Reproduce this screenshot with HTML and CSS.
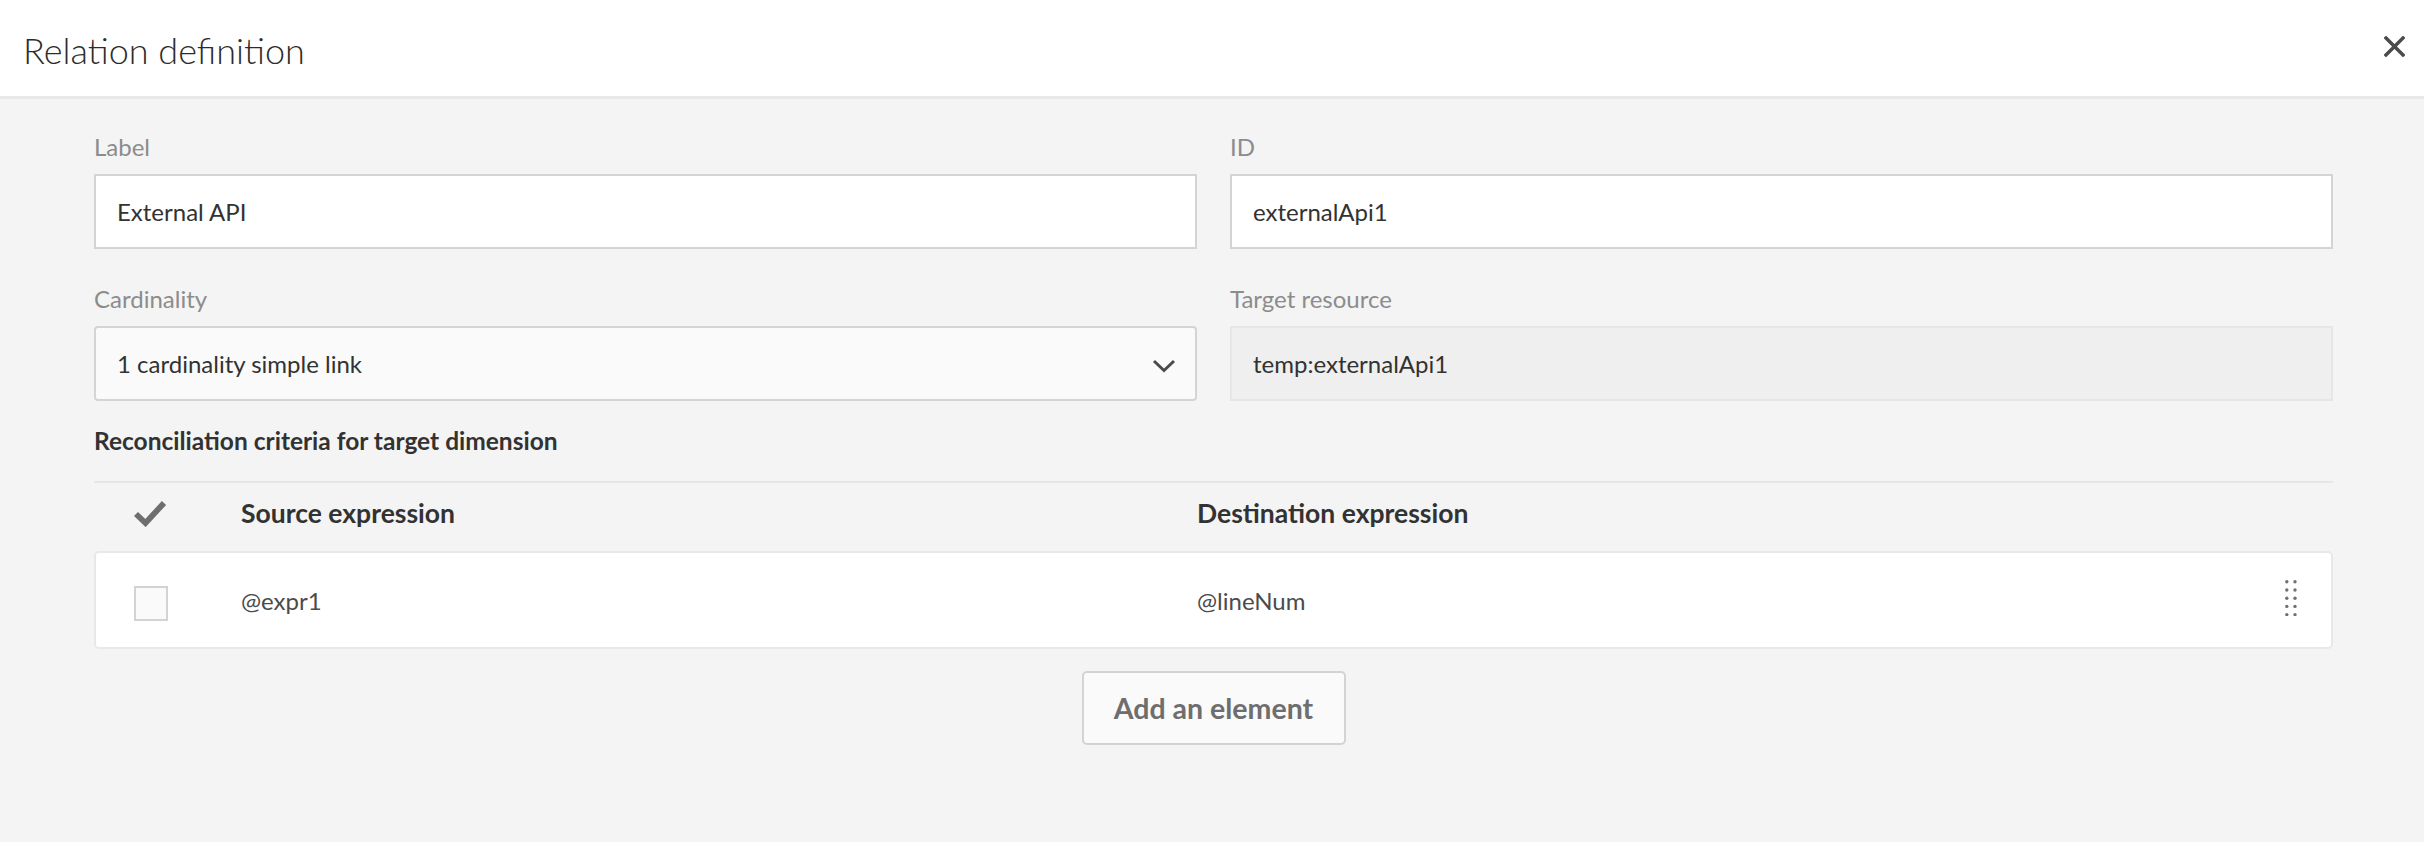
FILE: index.html
```html
<!DOCTYPE html>
<html lang="en">
<head>
<meta charset="utf-8">
<title>Relation definition</title>
<link rel="stylesheet" href="styles.css">
</head>
<body>
<div class="dialog">
  <header class="dlg-header">
    <h1 class="dlg-title">Relation definition</h1>
    <button class="close-btn" aria-label="Close">
      <svg width="21" height="21" viewBox="0 0 21 21"><path d="M2 2 L19 19 M19 2 L2 19" stroke="#4b4b4b" stroke-width="3.4" stroke-linecap="square" fill="none"/></svg>
    </button>
  </header>
  <main class="dlg-body">
    <div class="form-grid">
      <div class="field">
        <label class="field-label">Label</label>
        <div class="text-input">External API</div>
      </div>
      <div class="field">
        <label class="field-label">ID</label>
        <div class="text-input">externalApi1</div>
      </div>
      <div class="field">
        <label class="field-label">Cardinality</label>
        <div class="select-input">
          <span>1 cardinality simple link</span>
          <svg class="chevron" width="24" height="14" viewBox="0 0 24 14"><path d="M2 2 L12 11.5 L22 2" stroke="#4b4b4b" stroke-width="3" fill="none"/></svg>
        </div>
      </div>
      <div class="field">
        <label class="field-label">Target resource</label>
        <div class="text-input readonly">temp:externalApi1</div>
      </div>
    </div>

    <h2 class="section-title">Reconciliation criteria for target dimension</h2>

    <div class="criteria">
      <div class="criteria-head">
        <div class="cell-check">
          <svg width="34" height="27" viewBox="0 0 34 27"><path d="M3 14 L12.5 23 L31 3" stroke="#6e6e6e" stroke-width="5.8" fill="none"/></svg>
        </div>
        <div class="head-text">Source expression</div>
        <div class="head-text">Destination expression</div>
        <div></div>
      </div>
      <div class="criteria-row">
        <div class="cell-check"><span class="checkbox"></span></div>
        <div class="cell-text">@expr1</div>
        <div class="cell-text">@lineNum</div>
        <div class="cell-handle">
          <svg width="12" height="36" viewBox="0 0 12 36">
            <g fill="#707070">
              <circle cx="1.8" cy="1.8" r="1.7"/><circle cx="10" cy="1.8" r="1.7"/>
              <circle cx="1.8" cy="10" r="1.7"/><circle cx="10" cy="10" r="1.7"/>
              <circle cx="1.8" cy="18.2" r="1.7"/><circle cx="10" cy="18.2" r="1.7"/>
              <circle cx="1.8" cy="26.4" r="1.7"/><circle cx="10" cy="26.4" r="1.7"/>
              <circle cx="1.8" cy="34.6" r="1.7"/><circle cx="10" cy="34.6" r="1.7"/>
            </g>
          </svg>
        </div>
      </div>
    </div>

    <div class="actions">
      <button class="add-btn">Add an element</button>
    </div>
  </main>
</div>
</body>
</html>
```

FILE: styles.css
```css
* { box-sizing: border-box; }

html, body {
  margin: 0;
  padding: 0;
}

body {
  background: #f4f4f4;
  font-family: Lato, "Open Sans", "Liberation Sans", sans-serif;
  color: #323232;
  width: 2424px;
  min-height: 842px;
}

.dlg-header {
  height: 99px;
  background: #ffffff;
  border-bottom: 3px solid #e8e8e8;
  display: flex;
  align-items: center;
  justify-content: space-between;
  padding: 4px 19px 0 23px;
}

.dlg-title {
  margin: 0;
  font-weight: 300;
  font-size: 36px;
  line-height: 44px;
  color: #2c2c2c;
}

.close-btn {
  border: 0;
  background: transparent;
  padding: 0;
  width: 21px;
  height: 21px;
  display: flex;
  margin-top: -8px;
}

.dlg-body {
  padding: 33px 91px 40px 94px;
}

.form-grid {
  display: grid;
  grid-template-columns: 1103px 1103px;
  column-gap: 33px;
  row-gap: 35px;
}

.field-label {
  display: block;
  font-size: 24px;
  line-height: 29px;
  color: #8c8c8c;
  margin-bottom: 13px;
}

.text-input,
.select-input {
  height: 75px;
  border: 2px solid #d4d4d4;
  background: #ffffff;
  font-size: 24px;
  line-height: 29px;
  color: #323232;
  display: flex;
  align-items: center;
  padding: 0 21px;
}

.select-input {
  background: #fafafa;
  border-radius: 4px;
  justify-content: space-between;
  padding-right: 19px;
}

.chevron {
  display: block;
  margin-top: 4px;
}

.text-input.readonly {
  background: #efefef;
  border-color: #e6e6e6;
}

.section-title {
  margin: 25px 0 0;
  font-size: 24.5px;
  line-height: 29px;
  font-weight: 700;
  color: #323232;
}

.criteria {
  margin-top: 26px;
  border-top: 2px solid #e6e6e6;
}

.criteria-head {
  display: grid;
  grid-template-columns: 147px 956px 1fr 80px;
  align-items: center;
  height: 60px;
}

.criteria-head .cell-check {
  padding-left: 39px;
  display: flex;
}

.head-text {
  font-size: 26.5px;
  font-weight: 700;
  color: #323232;
}

.criteria-row {
  margin-top: 8px;
  height: 98px;
  background: #ffffff;
  border: 2px solid #e8e8e8;
  border-radius: 5px;
  display: grid;
  grid-template-columns: 145px 956px 1fr 80px;
  align-items: center;
}

.criteria-row .cell-check {
  padding-left: 38px;
  padding-top: 7px;
  display: flex;
}

.checkbox {
  display: block;
  width: 34px;
  height: 35px;
  border: 2px solid #d3d3d3;
  background: #fafafa;
}

.cell-text {
  font-size: 24px;
  color: #4b4b4b;
}

.cell-handle {
  display: flex;
  justify-content: flex-end;
  padding-right: 34px;
  margin-bottom: 4px;
}

.cell-handle svg {
  display: block;
}

.actions {
  display: flex;
  justify-content: center;
  margin-top: 22px;
}

.add-btn {
  width: 264px;
  height: 74px;
  border: 2px solid #d3d3d3;
  border-radius: 5px;
  background: #fafafa;
  font-family: Lato, "Open Sans", "Liberation Sans", sans-serif;
  font-size: 28.5px;
  font-weight: 700;
  color: #6e6e6e;
  padding: 0;
}
```
